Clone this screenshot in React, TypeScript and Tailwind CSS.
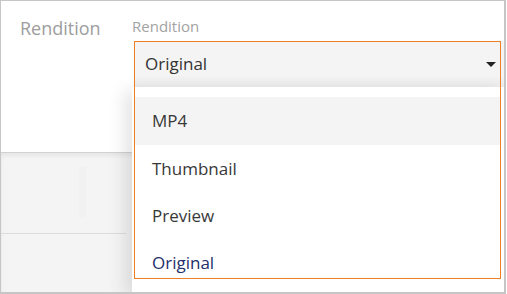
import React from "react";

export default function App() {
  const items = [
    { label: "MP4", active: true, selected: false, h: "h-[48px]" },
    { label: "Thumbnail", active: false, selected: false, h: "h-[47px]" },
    { label: "Preview", active: false, selected: false, h: "h-[47px]" },
    { label: "Original", active: false, selected: true, h: "h-[47px]" },
  ];
  return (
    <div className="w-[507px] h-[294px] bg-white">
      <div
        className="relative w-[506px] h-[294px] border-t border-l border-r-2 border-b-2 border-[#c6c6c6] overflow-hidden flex flex-col"
        style={{ fontFamily: '"Open Sans", "Noto Sans", sans-serif' }}
      >
        {/* top panel */}
        <div className="h-[151px] shrink-0 flex bg-white">
          <div className="w-[131px] shrink-0 pl-[19px] pt-[15px] text-[18px] leading-[24px] text-[#9d9d9d]">
            Rendition
          </div>
          <div className="flex-1 pt-[15px] flex flex-col">
            <div className="text-[15px] leading-[20px] text-[#a3a3a3]">Rendition</div>
            <div className="mt-[5px] ml-[2px] h-[46px] flex items-center justify-between pl-[11px] pr-[8px] bg-gradient-to-b from-[#f4f4f4] from-[75%] to-[#ebebeb]">
              <span className="text-[17px] leading-[24px] text-[#333333]">Original</span>
              <svg width="10" height="5" viewBox="0 0 10 5" className="mt-[1px]">
                <polygon points="0,0 10,0 5,5" fill="#222222" />
              </svg>
            </div>
          </div>
        </div>

        {/* bottom gray area */}
        <div className="flex-1 bg-[#f4f4f4] border-t border-[#d2d2d2] shadow-[inset_0_3px_4px_rgba(0,0,0,0.06)] flex flex-col">
          <div className="h-[81px] w-[125px] border-b border-[#dcdcdc] flex pt-[14px] pl-[78px]">
            <div className="w-[7px] h-[51px] bg-[#f1f1f1]" />
          </div>
        </div>

        {/* dropdown menu overlay */}
        <div className="absolute left-[131px] right-0 top-[86px] bottom-0 bg-white shadow-[-8px_4px_16px_rgba(0,0,0,0.10)] pt-[10px]">
          {items.map((it) => (
            <div
              key={it.label}
              className={`${it.h} ml-[3px] mr-[4px] pl-[17px] flex items-center text-[17px] leading-[24px] ${
                it.active ? "bg-[#f4f4f4]" : ""
              } ${it.selected ? "text-[#232f6b]" : "text-[#383838]"}`}
            >
              {it.label}
            </div>
          ))}
        </div>

        {/* focus outline */}
        <div className="absolute left-[133px] top-[40px] w-[367px] h-[238px] border border-[#ef7f24] pointer-events-none" />
      </div>
    </div>
  );
}
